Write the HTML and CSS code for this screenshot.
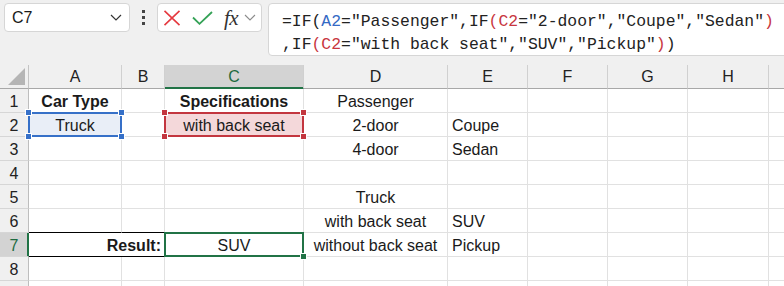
FILE: index.html
```html
<!DOCTYPE html>
<html lang="en">
<head>
    <meta charset="UTF-8">
    <title>Car Type</title>
    <link rel="stylesheet" href="styles.css">
</head>
<body>

    <div class="topbar">
        <div class="namebox">
            <span>C7</span>
            <svg width="12" height="7" viewBox="0 0 12 7"><path d="M1 1 L6 6 L11 1" stroke="#333" stroke-width="1.2" fill="none"/></svg>
        </div>
        <div class="dots">
            <span></span><span></span><span></span>
        </div>
        <div class="fxbox">
            <svg class="icon-x" width="18" height="16" viewBox="0 0 18 16"><path d="M1.5 0.8 L16.5 15.2 M16.5 0.8 L1.5 15.2" stroke="#e5393f" stroke-width="1.6" fill="none"/></svg>
            <svg class="icon-ok" width="21" height="14" viewBox="0 0 21 14"><path d="M1 6.5 L7.5 12.8 L20 1" stroke="#35a257" stroke-width="1.8" fill="none"/></svg>
            <span class="fx">fx</span>
            <svg class="icon-down" width="12" height="7" viewBox="0 0 12 7"><path d="M1 1 L6 6 L11 1" stroke="#8c8c8c" stroke-width="1.1" fill="none"/></svg>
        </div>
        <div class="formula">
            <div>=IF(<span class="ref-a">A2</span>="Passenger",IF<span class="lv2">(</span><span class="ref-c">C2</span>="2-door","Coupe","Sedan"<span class="lv2">)</span></div>
            <div>,IF<span class="lv2">(</span><span class="ref-c">C2</span>="with back seat","SUV","Pickup"<span class="lv2">)</span>)</div>
        </div>
    </div>

    <div class="sheet">
        <!-- cabecera de columnas -->
        <div class="corner"><span class="tri"></span></div>
        <div class="ch">A</div>
        <div class="ch">B</div>
        <div class="ch active">C</div>
        <div class="ch">D</div>
        <div class="ch">E</div>
        <div class="ch">F</div>
        <div class="ch">G</div>
        <div class="ch">H</div>
        <div class="ch"></div>

        <!-- fila 1 -->
        <div class="rh">1</div>
        <div class="c center bold">Car Type</div>
        <div class="c"></div>
        <div class="c center bold">Specifications</div>
        <div class="c center">Passenger</div>
        <div class="c"></div>
        <div class="c"></div><div class="c"></div><div class="c"></div><div class="c"></div>

        <!-- fila 2 -->
        <div class="rh">2</div>
        <div class="c center sel-blue">Truck<i class="h tl"></i><i class="h tr"></i><i class="h bl"></i><i class="h br"></i></div>
        <div class="c"></div>
        <div class="c center sel-red">with back seat<i class="h tl"></i><i class="h tr"></i><i class="h bl"></i><i class="h br"></i></div>
        <div class="c center">2-door</div>
        <div class="c">Coupe</div>
        <div class="c"></div><div class="c"></div><div class="c"></div><div class="c"></div>

        <!-- fila 3 -->
        <div class="rh">3</div>
        <div class="c"></div>
        <div class="c"></div>
        <div class="c"></div>
        <div class="c center">4-door</div>
        <div class="c">Sedan</div>
        <div class="c"></div><div class="c"></div><div class="c"></div><div class="c"></div>

        <!-- fila 4 -->
        <div class="rh">4</div>
        <div class="c"></div><div class="c"></div><div class="c"></div><div class="c"></div>
        <div class="c"></div><div class="c"></div><div class="c"></div><div class="c"></div><div class="c"></div>

        <!-- fila 5 -->
        <div class="rh">5</div>
        <div class="c"></div>
        <div class="c"></div>
        <div class="c"></div>
        <div class="c center">Truck</div>
        <div class="c"></div>
        <div class="c"></div><div class="c"></div><div class="c"></div><div class="c"></div>

        <!-- fila 6 -->
        <div class="rh">6</div>
        <div class="c line-under"></div>
        <div class="c line-under"></div>
        <div class="c"></div>
        <div class="c center">with back seat</div>
        <div class="c">SUV</div>
        <div class="c"></div><div class="c"></div><div class="c"></div><div class="c"></div>

        <!-- fila 7 -->
        <div class="rh active">7</div>
        <div class="c right bold merged">Result:</div>
        <div class="c center sel-green">SUV<i class="fill"></i></div>
        <div class="c center">without back seat</div>
        <div class="c">Pickup</div>
        <div class="c"></div><div class="c"></div><div class="c"></div><div class="c"></div>

        <!-- fila 8 -->
        <div class="rh">8</div>
        <div class="c"></div><div class="c"></div><div class="c"></div><div class="c"></div>
        <div class="c"></div><div class="c"></div><div class="c"></div><div class="c"></div><div class="c"></div>

        <!-- fila 9 (cortada por el borde) -->
        <div class="rh"></div>
        <div class="c"></div><div class="c"></div><div class="c"></div><div class="c"></div>
        <div class="c"></div><div class="c"></div><div class="c"></div><div class="c"></div><div class="c"></div>
    </div>

</body>
</html>
```

FILE: styles.css
```css
body {
    margin: 0;
    width: 784px;
    height: 286px;
    overflow: hidden;
    background-color: #f0f0f0;
    font-family: "Liberation Sans", Arial, sans-serif;
    color: #1a1a1a;
}

/* Barra de fórmulas */
.topbar {
    display: flex;
    align-items: flex-start;
    height: 65px;
    padding: 3px 0 0 4px;
    box-sizing: border-box;
}

.namebox {
    width: 126px;
    height: 29px;
    box-sizing: border-box;
    background-color: #fff;
    border: 1px solid #d6d6d6;
    border-radius: 4px;
    display: flex;
    align-items: center;
    justify-content: space-between;
    padding: 0 7px;
    font-size: 16px;
}

.dots {
    width: 27px;
    height: 29px;
    display: flex;
    flex-direction: column;
    align-items: center;
    justify-content: center;
    gap: 3px;
}

.dots span {
    width: 3px;
    height: 3px;
    background-color: #444;
}

.fxbox {
    width: 105px;
    height: 29px;
    box-sizing: border-box;
    background-color: #fff;
    border: 1px solid #d6d6d6;
    border-radius: 4px;
    display: flex;
    align-items: center;
    padding-left: 5px;
    margin-right: 6px;
}

.icon-ok {
    margin-left: 11px;
}

.fx {
    margin-left: 11px;
    font-family: "Liberation Serif", serif;
    font-style: italic;
    font-size: 21px;
    line-height: 20px;
    color: #333;
    letter-spacing: -0.5px;
}

.icon-down {
    margin-left: 6px;
}

.formula {
    flex: 1;
    height: 53px;
    margin-right: -12px;
    box-sizing: border-box;
    background-color: #fff;
    border: 1px solid #d6d6d6;
    border-radius: 4px;
    padding: 6px 0 0 13px;
    font-family: "Liberation Mono", monospace;
    font-size: 16.4px;
    line-height: 23px;
    color: #222;
    white-space: nowrap;
    overflow: hidden;
}

.ref-a {
    color: #3469c4;
}

.ref-c,
.lv2 {
    color: #c8363f;
}

/* Hoja */
.sheet {
    display: grid;
    grid-template-columns: 29px 93px 43px 139px 144px 80px 80px 80px 81px 40px;
    grid-auto-rows: 24px;
    font-size: 16px;
}

.corner,
.ch,
.rh {
    background-color: #f0f0f0;
    box-sizing: border-box;
    text-align: center;
    line-height: 23px;
    color: #222;
}

.corner {
    position: relative;
    border-right: 1px solid #c4c4c4;
    border-bottom: 1px solid #a8a8a8;
}

.tri {
    position: absolute;
    right: 3px;
    bottom: 3px;
    width: 0;
    height: 0;
    border-left: 17px solid transparent;
    border-bottom: 17px solid #b5b5b5;
}

.ch {
    border-right: 1px solid #d0d0d0;
    border-bottom: 1px solid #a8a8a8;
}

.ch.active {
    background-color: #d3d3d3;
    color: #1d6b40;
    border-bottom-color: #217346;
    box-shadow: inset 0 -1px #217346;
}

.rh {
    border-right: 1px solid #bdbdbd;
    border-bottom: 1px solid #d6d6d6;
    padding-top: 1px;
}

.rh.active {
    background-color: #d3d3d3;
    color: #1d6b40;
    border-right-color: #217346;
    box-shadow: inset -1px 0 #217346;
}

.c {
    position: relative;
    box-sizing: border-box;
    border-right: 1px solid #e1e1e1;
    border-bottom: 1px solid #e1e1e1;
    background-color: #fff;
    padding: 2px 4px 0;
    line-height: 22px;
    white-space: nowrap;
}

.center {
    text-align: center;
    padding: 2px 0 0;
}

.right {
    text-align: right;
    padding: 2px 3px 0 0;
}

.bold {
    font-weight: bold;
}

.line-under {
    border-bottom-color: #000;
}

.merged {
    grid-column: span 2;
    border-bottom-color: #000;
}

/* Selecciones */
.sel-blue {
    background-color: #e9eef7;
}

.sel-red {
    background-color: #f4d8da;
}

.sel-blue::after,
.sel-red::after,
.sel-green::after {
    content: "";
    position: absolute;
    top: -1px;
    left: -1px;
    right: -1px;
    bottom: -1px;
    border: 2px solid #3670c8;
}

.sel-red::after {
    border-color: #c3363f;
}

.sel-green::after {
    border-color: #217346;
}

.h {
    position: absolute;
    z-index: 1;
    width: 5px;
    height: 5px;
    border: 1px solid #fff;
    background-color: #3670c8;
}

.sel-red .h {
    background-color: #c3363f;
}

.tl { top: -4px; left: -4px; }
.tr { top: -4px; right: -4px; }
.bl { bottom: -4px; left: -4px; }
.br { bottom: -4px; right: -4px; }

.fill {
    position: absolute;
    z-index: 1;
    right: -4px;
    bottom: -4px;
    width: 5px;
    height: 5px;
    border: 1px solid #fff;
    background-color: #217346;
}
```
